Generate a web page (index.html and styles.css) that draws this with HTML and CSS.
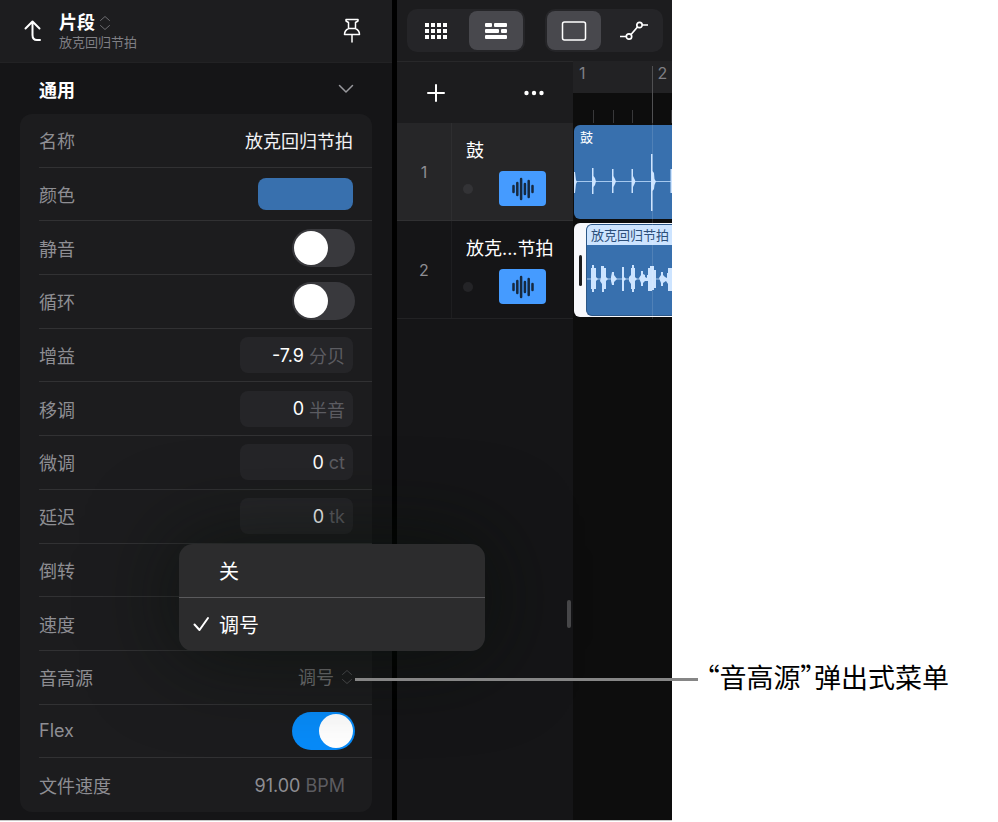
FILE: index.html
```html
<!DOCTYPE html>
<html lang="zh-CN">
<head>
    <meta charset="UTF-8">
    <meta name="viewport" content="width=device-width, initial-scale=1.0">
    <title>片段检查器</title>
    <link rel="stylesheet" href="styles.css">
</head>
<body>
    <div class="app">
        <!-- Inspector -->
        <section class="inspector">
            <header class="inspector-header">
                <button class="icon-button" aria-label="返回">
                    <svg width="18" height="22" viewBox="0 0 18 22"><path d="M1.500 8.500 L8.500 1.500 L15.500 8.500 M8.500 2 V15 Q8.500 20 13 20 H16"/></svg>
                </button>
                <div class="inspector-title">
                    <h1>片段 <svg class="updown" width="12" height="16" viewBox="0 0 12 16"><path d="M1.500 5.500 L6 1.500 L10.500 5.500 M1.500 10.500 L6 14.500 L10.500 10.500"/></svg></h1>
                    <p>放克回归节拍</p>
                </div>
                <button class="icon-button" aria-label="固定">
                    <svg class="pin" width="18" height="26" viewBox="0 0 18 26"><path d="M3 1.500 H15 V3 L12.500 4.500 V10.500 Q16.500 12.500 16.500 16.500 H1.500 Q1.500 12.500 5.500 10.500 V4.500 L3 3 Z M5.500 10.500 H12.500 M9 17 V24"/></svg>
                </button>
            </header>

            <div class="section-header">
                <h2>通用</h2>
                <button class="icon-button" aria-label="折叠">
                    <svg class="chevron" width="16" height="10" viewBox="0 0 16 10"><path d="M1.500 1.500 L8 8 L14.500 1.500"/></svg>
                </button>
            </div>

            <div class="card">
                <div class="row">
                    <label for="name">名称</label>
                    <input class="name-input" type="text" id="name" value="放克回归节拍">
                </div>
                <div class="row">
                    <label for="color">颜色</label>
                    <button class="color-swatch" id="color"></button>
                </div>
                <div class="row">
                    <label for="mute">静音</label>
                    <input class="toggle" type="checkbox" id="mute">
                </div>
                <div class="row">
                    <label for="loop">循环</label>
                    <input class="toggle" type="checkbox" id="loop">
                </div>
                <div class="row">
                    <label for="gain">增益</label>
                    <div class="field"><input type="text" id="gain" value="-7.9"><span>分贝</span></div>
                </div>
                <div class="row">
                    <label for="transpose">移调</label>
                    <div class="field"><input type="text" id="transpose" value="0"><span>半音</span></div>
                </div>
                <div class="row">
                    <label for="fine">微调</label>
                    <div class="field"><input type="text" id="fine" value="0"><span>ct</span></div>
                </div>
                <div class="row">
                    <label for="delay">延迟</label>
                    <div class="field"><input type="text" id="delay" value="0"><span>tk</span></div>
                </div>
                <div class="row"><span>倒转</span></div>
                <div class="row"><span>速度</span></div>
                <div class="row row-source">
                    <label for="source">音高源</label>
                    <div class="source-select">
                        <select id="source">
                            <option>关</option>
                            <option selected>调号</option>
                        </select>
                        <svg class="updown" width="12" height="16" viewBox="0 0 12 16"><path d="M1.500 5.500 L6 1.500 L10.500 5.500 M1.500 10.500 L6 14.500 L10.500 10.500"/></svg>
                    </div>
                    <!-- Pop-up menu -->
                    <div class="menu" role="menu">
                        <button role="menuitemradio" aria-checked="false"><span class="check"></span>关</button>
                        <button role="menuitemradio" aria-checked="true"><span class="check"><svg width="17" height="16" viewBox="0 0 17 16"><path d="M1.500 8.500 L6.500 14 L15 2"/></svg></span>调号</button>
                    </div>
                </div>
                <div class="row">
                    <label for="flex">Flex</label>
                    <input class="toggle" type="checkbox" id="flex" checked>
                </div>
                <div class="row">
                    <span>文件速度</span>
                    <div class="field field-readonly"><output>91.00</output><span>BPM</span></div>
                </div>
            </div>
        </section>

        <!-- Tracks area -->
        <section class="tracks">
            <div class="toolbar">
                <div class="segmented">
                    <button aria-label="现场循环网格">
                        <svg width="24" height="18" viewBox="0 0 24 18" fill="#fff">
                            <path d="M1 1h4v4H1z M7 1h4v4H7z M13 1h4v4h-4z M19 1h4v4h-4z M1 7h4v4H1z M7 7h4v4H7z M13 7h4v4h-4z M19 7h4v4h-4z M1 13h4v4H1z M7 13h4v4H7z M13 13h4v4h-4z M19 13h4v4h-4z"/>
                        </svg>
                    </button>
                    <button class="active" aria-label="轨道">
                        <svg width="24" height="18" viewBox="0 0 24 18" fill="#fff">
                            <rect x="1" y="1" width="7" height="4" rx="1"/>
                            <rect x="10" y="1" width="13" height="4" rx="1"/>
                            <rect x="1" y="7" width="14" height="4" rx="1"/>
                            <rect x="17" y="7" width="6" height="4" rx="1"/>
                            <rect x="1" y="13" width="22" height="4" rx="1"/>
                        </svg>
                    </button>
                </div>
                <div class="segmented">
                    <button class="active" aria-label="片段">
                        <svg width="26" height="20" viewBox="0 0 26 20" fill="none" stroke="#fff" stroke-width="1.500"><rect x="1.500" y="1" width="23" height="18" rx="2"/></svg>
                    </button>
                    <button aria-label="自动化">
                        <svg width="30" height="20" viewBox="0 0 30 20" fill="none" stroke="#fff" stroke-width="1.700">
                            <circle cx="10" cy="15.500" r="2.700"/>
                            <circle cx="20.500" cy="4" r="2.700"/>
                            <path d="M1 15.500 H7.300 M12 13.500 L18.500 6 M23.200 4 H29"/>
                        </svg>
                    </button>
                </div>
            </div>

            <div class="tracks-body">
                <div class="track-list">
                    <div class="track-actions">
                        <button class="icon-button" aria-label="添加轨道">
                            <svg width="18" height="18" viewBox="0 0 18 18"><path d="M9 1 V17 M1 9 H17"/></svg>
                        </button>
                        <button class="icon-button" aria-label="更多">
                            <svg class="dots" width="20" height="6" viewBox="0 0 20 6"><circle cx="2.500" cy="3" r="2.200"/><circle cx="10" cy="3" r="2.200"/><circle cx="17.500" cy="3" r="2.200"/></svg>
                        </button>
                    </div>
                    <div class="track selected">
                        <div class="track-number">1</div>
                        <div class="track-info">
                            <h3>鼓</h3>
                            <div class="track-controls">
                                <span class="level-dot"></span>
                                <button class="track-icon" aria-label="音频轨道 1">
                                    <svg width="22" height="24" viewBox="0 0 22 24"><path d="M1.500 9 V15 M5.300 6 V18 M9.100 2 V22 M12.900 7 V17 M16.700 4 V20 M20.500 9 V15"/></svg>
                                </button>
                            </div>
                        </div>
                    </div>
                    <div class="track">
                        <div class="track-number">2</div>
                        <div class="track-info">
                            <h3>放克...节拍</h3>
                            <div class="track-controls">
                                <span class="level-dot"></span>
                                <button class="track-icon" aria-label="音频轨道 2">
                                    <svg width="22" height="24" viewBox="0 0 22 24"><path d="M1.500 9 V15 M5.300 6 V18 M9.100 2 V22 M12.900 7 V17 M16.700 4 V20 M20.500 9 V15"/></svg>
                                </button>
                            </div>
                        </div>
                    </div>
                    <div class="resize-handle"></div>
                </div>

                <div class="timeline">
                    <div class="ruler">
                        <div class="ruler-bars"><span>1</span><span>2</span></div>
                        <svg class="ruler-ticks" width="100%" height="30"><path d="M20.500 17 V30 M40.500 17 V30 M59.500 17 V30 M98.500 17 V30"/></svg>
                    </div>
                    <div class="lane">
                        <div class="clip">
                            <div class="clip-name">鼓</div>
                            <svg class="wave" width="98" height="94" viewBox="0 0 98 94">
                                <path class="axis" d="M0 56.500 H98"/>
                                <path d="M0 47 H1 L2 55 L3 57 L2 59 L1 68 H0 Z M18 43 H19.500 V51 L21 53 L22 56.500 L21 60 L19.500 62 V69 H18 Z M38 44 H39.500 V51 L41 54 L42 56.500 L41 59 L39.500 62 V68 H38 Z M57.500 44 H59 V51 L60.500 54 L61.500 56.500 L60.500 59 L59 62 V68 H57.500 Z M77 29 H78.500 V46 L80 48 L80.500 54 L82 56.500 L80.500 60 L80 64 L78.500 66 V86 H77 Z M96.500 44 H98 V68 H96.500 Z"/>
                            </svg>
                        </div>
                    </div>
                    <div class="lane">
                        <div class="clip-selected">
                            <span class="trim-handle"></span>
                            <div class="clip">
                                <div class="clip-name">放克回归节拍</div>
                                <svg class="wave" width="85" height="92" viewBox="0 1 85 92">
                                    <path class="axis" d="M0 55 H85"/>
                                    <path d="M4 54 V44 H5 V41 H7 V44 H9 V53 L11 55 L9 57 V65 H7 V68 H5 V65 H4 Z M14 53 V42 H17 V44 H19 V53 L21 55 L19 57 V65 H17 V68 H15 V60 L13 57 Z M24 53 L25 48 H27 V51 L30 55 L27 58 V61 H25 L24 57 Z M35 54 V43 H37 V53 L39 55 L37 57 V67 H35 Z M42 53 L44 51 V44 H45 V41 H47 V44 H48 V53 L50 55 L48 57 V65 H47 V68 H45 V65 H44 V60 L42 57 Z M52 54 L54 51 V47 H56 V50 L58 51 V53 L60 54 V51 H61 V44 H63 V42 H67 V46 H69 V64 H67 V66 H65 V67 H61 V57 L58 57 L56 59 V62 H54 V59 Z M72 54 L74 51 V48 H76 V51 L78 53 L80 54 V49 H81 V44 H85 V67 H81 V60 L79 57 L76 59 V62 H74 V59 Z"/>
                                </svg>
                            </div>
                        </div>
                    </div>
                </div>
            </div>
        </section>
    </div>

    <aside class="callout">
        <p>“音高源”弹出式菜单</p>
    </aside>
</body>
</html>
```

FILE: styles.css
```css
* {
    box-sizing: border-box;
}

body {
    margin: 0;
    display: grid;
    grid-template-columns: minmax(0, 1fr) 326px;
    min-height: 100vh;
    background-color: #fff;
    color: #fff;
    font-family: Inter, "Noto Sans CJK SC", sans-serif;
    font-size: 18px;
}

h1, h2, h3, p {
    margin: 0;
}

button, input, select {
    font: inherit;
    color: inherit;
    background: none;
    border: none;
    padding: 0;
    margin: 0;
}

button {
    cursor: pointer;
    display: flex;
    align-items: center;
    justify-content: center;
}

svg {
    display: block;
    flex: none;
}

.app {
    display: grid;
    grid-template-columns: 397px minmax(0, 1fr);
    background-color: #0d0d0d;
    border-bottom: 1px solid #c8c8c8;
    margin-bottom: 1px;
}

.icon-button svg,
.updown {
    fill: none;
    stroke: #fff;
    stroke-width: 2;
    stroke-linecap: round;
    stroke-linejoin: round;
}

/* Inspector */
.inspector {
    display: flex;
    flex-direction: column;
    background-color: #151517;
    border-right: 5px solid #000;
    padding-bottom: 8px;
}

.inspector-header {
    display: flex;
    align-items: center;
    height: 63px;
    padding: 0 31px 0 24px;
    background-color: #1d1d1f;
    border-bottom: 1px solid #222224;
}

.inspector-title {
    flex: 1;
    margin-left: 17px;
    padding-top: 2px;
}

.inspector-title h1 {
    display: flex;
    align-items: center;
    gap: 4px;
    font-size: 18px;
    line-height: 20px;
    font-weight: 700;
}

.inspector-title p {
    color: #7f7f84;
    font-size: 13px;
    line-height: 18px;
}

.updown {
    stroke: #6c6c70;
    stroke-width: 1;
}

.icon-button .pin {
    stroke-width: 1.5;
}

.section-header {
    display: flex;
    align-items: center;
    justify-content: space-between;
    height: 51px;
    padding: 0 38px 0 39px;
}

.section-header h2 {
    font-size: 18px;
    font-weight: 700;
}

.icon-button .chevron {
    stroke: #98989d;
    stroke-width: 1.5;
}

.card {
    flex: 1;
    display: grid;
    grid-auto-rows: minmax(53px, 1fr);
    margin: 0 20px;
    padding-left: 19px;
    background-color: #1c1c1e;
    border-radius: 12px;
}

.row {
    display: flex;
    align-items: center;
    justify-content: space-between;
    padding-right: 19px;
    color: #8e8e93;
    border-bottom: 1px solid #313133;
}

.row:last-child {
    border-bottom: none;
}

.name-input {
    flex: 1;
    min-width: 0;
    color: #f2f2f4;
    text-align: right;
}

.color-swatch {
    width: 95px;
    height: 32px;
    border-radius: 8px;
    background-color: #3870ae;
}

.toggle {
    appearance: none;
    display: flex;
    align-items: center;
    width: 63px;
    height: 38px;
    margin-right: -2px;
    padding: 0 2px;
    border-radius: 19px;
    background-color: #39393d;
}

.toggle::before {
    content: "";
    width: 34px;
    height: 34px;
    border-radius: 50%;
    background-color: #fff;
}

.toggle:checked {
    justify-content: flex-end;
    background-color: #078bf9;
}

.field {
    display: flex;
    align-items: center;
    gap: 5px;
    width: 113px;
    height: 36px;
    padding: 0 8px;
    border-radius: 8px;
    background-color: #252528;
}

.field input {
    flex: 1;
    min-width: 0;
    color: #fff;
    text-align: right;
}

.field span {
    color: #5c5c61;
}

.field-readonly {
    justify-content: flex-end;
    background: none;
}

.source-select {
    display: flex;
    align-items: center;
    gap: 7px;
    color: #707072;
}

.source-select select {
    appearance: none;
    text-align-last: right;
}

.source-select .updown {
    stroke: #505052;
}

/* Pop-up menu, opens above the row */
.row-source {
    position: relative;
}

.menu {
    position: absolute;
    z-index: 10;
    bottom: 100%;
    right: -113px;
    width: 306px;
    border-radius: 14px;
    background-color: #2c2c2d;
    box-shadow: 0 0 90px rgba(8, 16, 10, 0.7);
    overflow: hidden;
}

.menu button {
    width: 100%;
    height: 53px;
    justify-content: flex-start;
    padding-left: 14px;
    color: #fff;
    font-size: 20px;
}

.menu button + button {
    height: 54px;
    border-top: 1px solid #5a5a5c;
}

.check {
    width: 26px;
}

.check svg {
    fill: none;
    stroke: #fff;
    stroke-width: 2;
    stroke-linecap: round;
    stroke-linejoin: round;
}

/* Tracks area */
.tracks {
    display: flex;
    flex-direction: column;
    min-width: 0;
}

.toolbar {
    display: flex;
    align-items: center;
    gap: 20px;
    height: 61px;
    padding-left: 10px;
    background-color: #1c1c1e;
    overflow: hidden;
}

.segmented {
    display: flex;
    gap: 6px;
    padding: 2px;
    border-radius: 10px;
    background-color: #252528;
}

.segmented button {
    width: 54px;
    height: 39px;
    border-radius: 8px;
}

.segmented .active {
    background-color: #48484d;
}

.tracks-body {
    flex: 1;
    display: grid;
    grid-template-columns: 176px minmax(0, 1fr);
}

.track-list {
    position: relative;
    background-color: #151517;
}

.track-actions {
    display: flex;
    align-items: center;
    justify-content: space-between;
    height: 62px;
    padding: 0 29px 0 30px;
    background-color: #1c1c1e;
    border-top: 1px solid #28282a;
}

.icon-button .dots {
    fill: #fff;
    stroke: none;
}

.track {
    display: flex;
    height: 98px;
    border-bottom: 1px solid #222224;
}

.track.selected {
    background-color: #262628;
    border-bottom-color: #303032;
}

.track-number {
    display: flex;
    align-items: center;
    justify-content: center;
    width: 55px;
    border-right: 1px solid rgba(255, 255, 255, 0.04);
    color: #8e8e93;
    font-size: 16px;
}

.track-info {
    flex: 1;
    padding: 15px 14px 0 11px;
}

.track-info h3 {
    padding-left: 3px;
    font-size: 18px;
    line-height: 26px;
    font-weight: 400;
    white-space: nowrap;
}

.track-controls {
    display: flex;
    align-items: center;
    gap: 26px;
    margin-top: 7px;
}

.level-dot {
    width: 10px;
    height: 10px;
    border-radius: 50%;
    background-color: rgba(150, 150, 160, 0.12);
}

.track-icon {
    width: 47px;
    height: 35px;
    border-radius: 4px;
    background-color: #459bff;
}

.track-icon svg {
    fill: none;
    stroke: #16293f;
    stroke-width: 2.5;
    stroke-linecap: round;
}

.resize-handle {
    position: absolute;
    right: 2px;
    top: calc(50% + 159px);
    width: 4px;
    height: 28px;
    border-radius: 2px;
    background-color: #48484a;
}

.timeline {
    position: relative;
    overflow: hidden;
}

/* Bar line running through ruler and clips */
.timeline::before,
.timeline::after {
    content: "";
    position: absolute;
    left: 79px;
    width: 1px;
}

.timeline::before {
    top: 5px;
    height: 57px;
    background-color: #505052;
}

.timeline::after {
    top: 62px;
    height: 196px;
    background-color: rgba(255, 255, 255, 0.12);
}

.ruler-bars {
    display: flex;
    gap: 72px;
    height: 32px;
    padding: 3px 6px 0;
    background-color: #222224;
    color: #7f7f84;
    font-size: 16px;
    line-height: 18px;
}

.ruler-ticks {
    fill: none;
    stroke: #38383a;
}

.lane {
    height: 98px;
    padding: 2px 0 2px 1px;
}

.clip {
    position: relative;
    height: 94px;
    border-radius: 6px 0 0 6px;
    background-color: #3870ae;
    overflow: hidden;
}

.clip-name {
    padding: 2px 6px;
    font-size: 13px;
    line-height: 20px;
    white-space: nowrap;
}

.wave {
    position: absolute;
    top: 0;
    left: 0;
    fill: #cde4ff;
}

.wave .axis {
    stroke: #a5c8ee;
}

.clip-selected {
    display: flex;
    align-items: center;
    gap: 4px;
    height: 94px;
    padding-left: 5px;
    border-radius: 6px 0 0 6px;
    background-color: #f7f8fc;
}

.trim-handle {
    width: 3px;
    height: 31px;
    border-radius: 2px;
    background-color: #1c1c1e;
}

.clip-selected .clip {
    flex: 1;
    min-width: 0;
    height: 92px;
    border: 1px solid #2c5787;
    border-right: none;
}

.clip-selected .clip-name {
    padding: 0 4px;
    background-color: #cde4ff;
    color: #2c4f7a;
}

/* Callout */
.callout {
    display: flex;
    align-items: flex-end;
    padding: 0 0 125px 34px;
    color: #000;
}

.callout p {
    position: relative;
    font-family: "Noto Sans CJK SC", sans-serif;
    font-feature-settings: "palt";
    font-size: 27px;
    line-height: 40px;
    white-space: nowrap;
}

.callout p::before {
    content: "";
    position: absolute;
    z-index: 20;
    top: 21px;
    right: calc(100% + 8px);
    width: 343px;
    height: 3px;
    background-color: #868686;
}
```
